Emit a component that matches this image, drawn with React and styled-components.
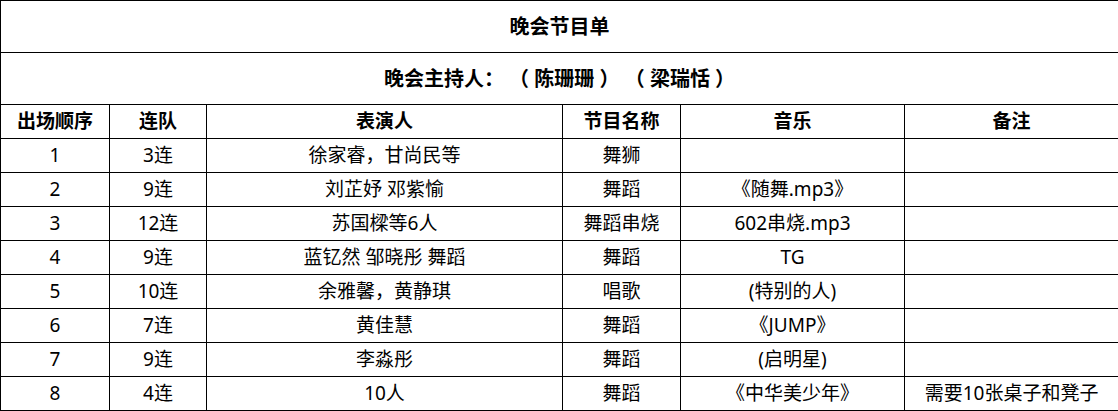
import React from 'react';
import styled, {createGlobalStyle} from 'styled-components';

const GlobalStyle = createGlobalStyle`
  html, body { margin: 0; padding: 0; background: #fff; }
  body { font-family: "Noto Sans", "Noto Sans CJK SC", sans-serif; color: #000; }
`;

const Sheet = styled.table`
  width: 1118px; border-collapse: collapse; table-layout: fixed;
  font-family: "Noto Sans", "Noto Sans CJK SC", sans-serif;
  text-spacing-trim: space-all;
`;
const TitleCell = styled.td`
  height: 51px; padding: 0; border: 1px solid #000; text-align: center;
  font-size: 20px; font-weight: 700; line-height: 1; white-space: pre;
`;
const HeadCell = styled.th`
  height: 33px; padding: 0; border: 1px solid #000; text-align: center;
  font-size: 19px; font-weight: 700; line-height: 1;
`;
const Cell = styled.td`
  height: 33px; padding: 0; border: 1px solid #000; text-align: center;
  font-size: 19px; font-weight: 400; line-height: 1; white-space: nowrap;
`;

const COLS = [109, 97, 356, 118, 224, 214];
const HEADERS = ['出场顺序', '连队', '表演人', '节目名称', '音乐', '备注'];

const ROWS = [
  ['1', '3连', '徐家睿，甘尚民等', '舞狮', '', ''],
  ['2', '9连', '刘芷妤 邓紫愉', '舞蹈', '《随舞.mp3》', ''],
  ['3', '12连', '苏国樑等6人', '舞蹈串烧', '602串烧.mp3', ''],
  ['4', '9连', '蓝钇然 邹晓彤 舞蹈', '舞蹈', 'TG', ''],
  ['5', '10连', '余雅馨，黄静琪', '唱歌', '(特别的人)', ''],
  ['6', '7连', '黄佳慧', '舞蹈', '《JUMP》', ''],
  ['7', '9连', '李淼彤', '舞蹈', '(启明星)', ''],
  ['8', '4连', '10人', '舞蹈', '《中华美少年》', '需要10张桌子和凳子'],
];

function App() {
  return (
    <>
      <GlobalStyle />
      <Sheet>
        <colgroup>
          {COLS.map((w, i) => <col key={i} style={{width: w}} />)}
        </colgroup>
        <tbody>
          <tr><TitleCell colSpan={6}>晚会节目单</TitleCell></tr>
          <tr><TitleCell colSpan={6}>晚会主持人： （ 陈珊珊 ） （ 梁瑞恬 ）</TitleCell></tr>
          <tr>
            {HEADERS.map(h => <HeadCell key={h}>{h}</HeadCell>)}
          </tr>
          {ROWS.map(r => (
            <tr key={r[0]}>
              {r.map((c, i) => <Cell key={i}>{c}</Cell>)}
            </tr>
          ))}
        </tbody>
      </Sheet>
    </>
  );
}

export default App;
